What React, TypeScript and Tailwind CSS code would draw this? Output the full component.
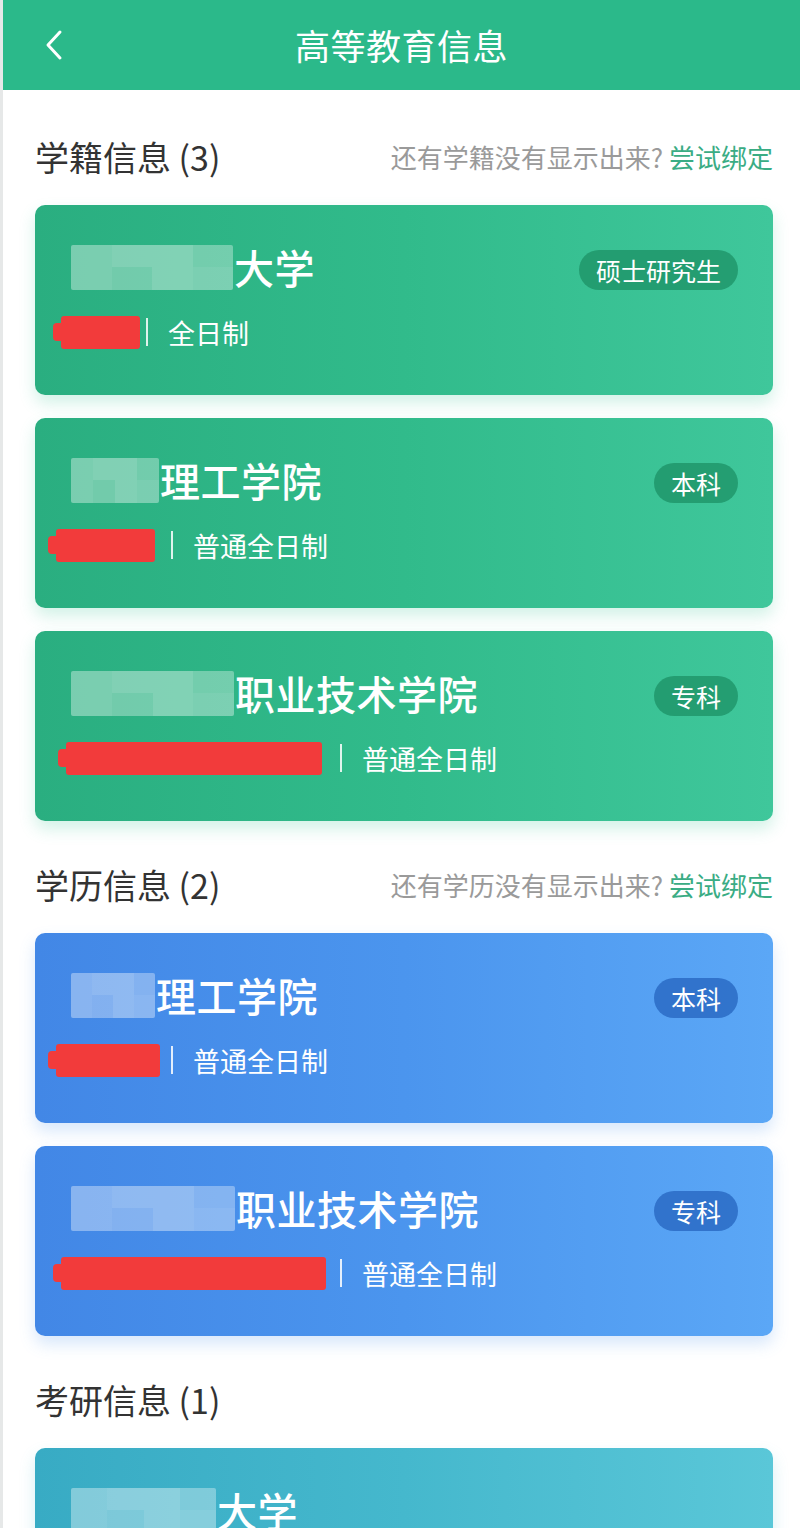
import React from "react"

type Tone = "green" | "blue" | "teal"

interface Record {
  tone: Tone
  blurW: string
  name: string
  redClass: string
  sepClass: string
  mode: string
  badge?: string
}

const toneStyles: { [k in Tone]: { card: string; badge: string } } = {
  green: {
    card: "bg-gradient-to-r from-[#2aae80] via-[#31bb8b] to-[#3fc79b] shadow-[0_8px_16px_rgba(52,196,146,0.22)]",
    badge: "bg-[#1e9368]/80",
  },
  blue: {
    card: "bg-gradient-to-r from-[#4287e6] via-[#4b95ee] to-[#5ba7f6] shadow-[0_8px_16px_rgba(74,146,236,0.22)]",
    badge: "bg-[#2a6bc4]/85",
  },
  teal: {
    card: "bg-gradient-to-r from-[#38abc4] via-[#45b8cd] to-[#5ac7d8] shadow-[0_8px_16px_rgba(70,184,206,0.22)]",
    badge: "bg-[#2a8ea6]/85",
  },
}

const sections: { title: string; note?: string; items: Record[] }[] = [
  {
    title: "学籍信息 (3)",
    note: "还有学籍没有显示出来?",
    items: [
      { tone: "green", blurW: "w-[162px]", name: "大学", redClass: "ml-[-18px] w-[87px]", sepClass: "ml-[6px]", mode: "全日制", badge: "硕士研究生" },
      { tone: "green", blurW: "w-[88px]", name: "理工学院", redClass: "ml-[-23px] w-[107px]", sepClass: "ml-[16px]", mode: "普通全日制", badge: "本科" },
      { tone: "green", blurW: "w-[163px]", name: "职业技术学院", redClass: "ml-[-13px] w-[264px]", sepClass: "ml-[18px]", mode: "普通全日制", badge: "专科" },
    ],
  },
  {
    title: "学历信息 (2)",
    note: "还有学历没有显示出来?",
    items: [
      { tone: "blue", blurW: "w-[84px]", name: "理工学院", redClass: "ml-[-23px] w-[112px]", sepClass: "ml-[11px]", mode: "普通全日制", badge: "本科" },
      { tone: "blue", blurW: "w-[164px]", name: "职业技术学院", redClass: "ml-[-18px] w-[273px]", sepClass: "ml-[14px]", mode: "普通全日制", badge: "专科" },
    ],
  },
  {
    title: "考研信息 (1)",
    items: [
      { tone: "teal", blurW: "w-[145px]", name: "大学", redClass: "ml-[-18px] w-[110px]", sepClass: "ml-[10px]", mode: "全日制" },
    ],
  },
]

function BlurBlock({ width }: { width: string }) {
  // mosaic standing in for the censored school name
  return (
    <div className={`${width} h-[45px] flex overflow-hidden rounded-[2px] bg-white/30`}>
      <div className="flex-1 bg-white/10" />
      <div className="flex-1 flex flex-col">
        <div className="flex-1 bg-white/15" />
        <div className="flex-1 bg-white/5" />
      </div>
      <div className="flex-1 bg-white/15" />
      <div className="flex-1 flex flex-col">
        <div className="flex-1 bg-white/5" />
        <div className="flex-1 bg-white/10" />
      </div>
    </div>
  )
}

function RedBar({ className }: { className: string }) {
  return (
    <div className={`${className} flex items-center h-[33px]`}>
      <div className="w-[8px] h-[18px] bg-[#f23b3b] rounded-l-[4px]" />
      <div className="flex-1 h-full bg-[#f23b3b] rounded-[3px]" />
    </div>
  )
}

function RecordCard({ item }: { item: Record }) {
  const tone = toneStyles[item.tone]
  return (
    <div className={`h-[190px] rounded-[10px] ${tone.card} pl-[36px] pr-[35px] pt-[39px] text-white`}>
      <div className="flex items-center h-[46px]">
        <BlurBlock width={item.blurW} />
        <span className="ml-[1px] text-[40px] leading-none font-medium tracking-[0.5px]">{item.name}</span>
        {item.badge && (
          <span className={`ml-auto mt-[6px] h-[40px] px-[17px] rounded-full flex items-center text-[25px] leading-none ${tone.badge}`}>
            {item.badge}
          </span>
        )}
      </div>
      <div className="mt-[25px] flex items-center h-[34px]">
        <RedBar className={item.redClass} />
        <span className={`${item.sepClass} w-[2px] h-[28px] bg-white/85`} />
        <span className="ml-[20px] text-[27px] leading-none">{item.mode}</span>
      </div>
    </div>
  )
}

export default function App() {
  return (
    <div
      className="h-[1528px] overflow-hidden bg-white border-l-[3px] border-[#e6e8e8]"
      style={{ fontFamily: '"Noto Sans CJK SC", "Noto Sans", sans-serif' }}
    >
      {/* Top bar */}
      <div className="h-[90px] bg-[#2bb98a] flex items-center relative">
        <svg className="ml-[40px]" width="22" height="32" viewBox="0 0 22 32" fill="none">
          <path d="M17 3 L5 16 L17 29" stroke="white" strokeWidth="3" strokeLinecap="round" strokeLinejoin="round" />
        </svg>
        <div className="absolute inset-0 flex items-center justify-center text-white text-[35px] tracking-[0.5px]">
          高等教育信息
        </div>
      </div>

      <div className="pl-[32px] pr-[27px] pt-[42px]">
        {sections.map((s, si) => (
          <div key={s.title} className={si === 0 ? "" : "mt-[39px]"}>
            <div className="h-[50px] flex items-center justify-between">
              <span className="text-[34px] text-[#333333] leading-none">{s.title}</span>
              {s.note && (
                <span className="text-[26px] leading-none text-[#9a9a9a]">
                  {s.note} <span className="text-[#3aac84]">尝试绑定</span>
                </span>
              )}
            </div>
            <div className="mt-[23px] flex flex-col gap-[23px]">
              {s.items.map((it, i) => (
                <RecordCard key={i} item={it} />
              ))}
            </div>
          </div>
        ))}
      </div>
    </div>
  )
}
